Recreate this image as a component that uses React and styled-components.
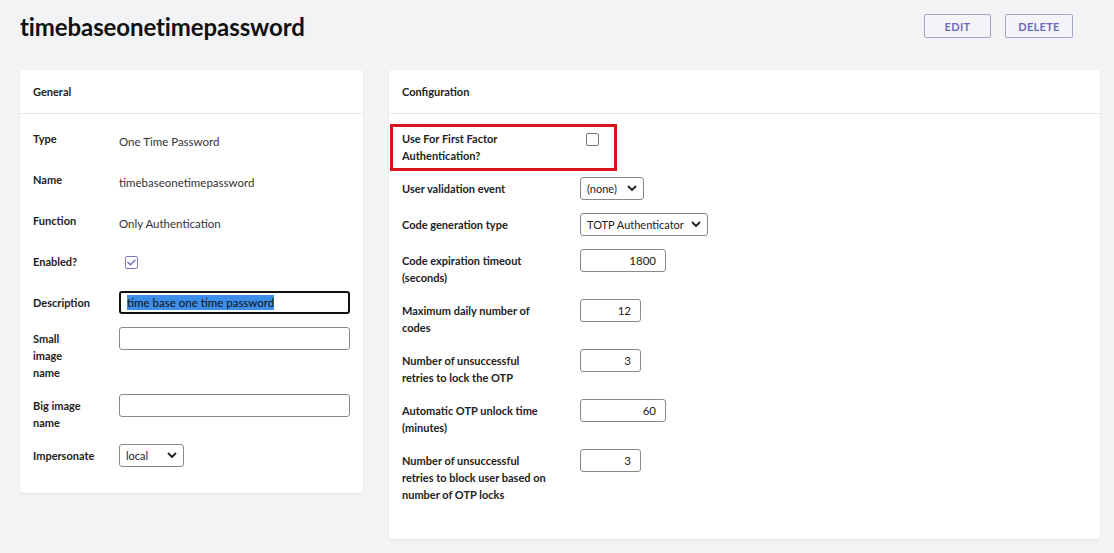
import styled, { createGlobalStyle } from "styled-components";

const GlobalStyle = createGlobalStyle`
  body {
    margin: 0;
    background: #f2f3f5;
    font-family: Lato, "Open Sans", sans-serif;
    color: #222;
  }
`;

const Page = styled.div`
  padding: 0 14px 0 20px;
  min-height: 553px;
  box-sizing: border-box;
`;

const Header = styled.div`
  display: flex;
  align-items: center;
  justify-content: space-between;
  height: 53px;
  padding-right: 27px;
  margin-bottom: 17px;
`;

const Title = styled.h1`
  margin: 0;
  font-size: 24px;
  font-weight: 700;
  color: #111;
  letter-spacing: -0.1px;
`;

const Actions = styled.div`
  display: flex;
  gap: 14px;
  margin-top: -1px;
`;

const Button = styled.button`
  width: ${({ $w }) => $w}px;
  height: 24px;
  background: #f4f4f8;
  border: 1px solid #a4a4cc;
  border-radius: 2px;
  color: #6b6bbd;
  font-family: inherit;
  font-size: 11px;
  font-weight: 700;
  letter-spacing: 0.3px;
`;

const Columns = styled.div`
  display: flex;
  align-items: flex-start;
  gap: 26px;
`;

const Card = styled.section`
  width: ${({ $w }) => $w}px;
  background: #fff;
  border-radius: 4px;
  box-shadow: 0 1px 2px rgba(0, 0, 0, 0.08);
  flex-shrink: 0;
`;

const CardHead = styled.div`
  height: 43px;
  display: flex;
  align-items: center;
  padding: 0 13px;
  border-bottom: 1px solid #e6e7ea;
  font-size: 11px;
  font-weight: 700;
  color: #222;
`;

const CardBody = styled.div`
  display: flex;
  flex-direction: column;
  gap: 13px;
  padding: ${({ $pad }) => $pad};
`;

const Row = styled.div`
  display: grid;
  grid-template-columns: ${({ $label }) => $label}px 1fr;
  align-items: start;
  min-height: ${({ $tall }) => ($tall ? 28 : 23)}px;
  position: relative;
`;

const Label = styled.div`
  padding-top: 3px;
  font-size: 11px;
  line-height: 17px;
  font-weight: 700;
  color: #222;
`;

const Value = styled.div`
  padding-top: 6px;
  font-size: 11.5px;
  line-height: 17px;
  color: #333;
`;

const TextBox = styled.div`
  box-sizing: border-box;
  width: ${({ $w }) => $w}px;
  height: 23px;
  border: ${({ $focus }) => ($focus ? "2px solid #111" : "1px solid #8a8a8a")};
  border-radius: 3px;
  background: #fff;
  display: flex;
  align-items: center;
  justify-content: ${({ $num }) => ($num ? "flex-end" : "flex-start")};
  padding: ${({ $focus }) => ($focus ? "0 6px" : "0 9px 0 7px")};
  font-size: 11.5px;
  color: #222;
`;

const Selected = styled.span`
  background: #3d8ee8;
  color: #111;
  line-height: 15px;
`;

const Select = styled.div`
  box-sizing: border-box;
  width: ${({ $w }) => $w}px;
  height: 23px;
  border: 1px solid #8a8a8a;
  border-radius: 3px;
  background: #fff;
  display: flex;
  align-items: center;
  justify-content: space-between;
  gap: 4px;
  padding: 0 6px 0 6px;
  font-size: 11px;
  color: #222;
  white-space: nowrap;
`;

const Check = styled.div`
  box-sizing: border-box;
  width: 13px;
  height: 13px;
  margin: ${({ $m }) => $m};
  border: 1px solid ${({ $on }) => ($on ? "#7b7bc4" : "#777")};
  border-radius: 2px;
  background: #fff;
  display: flex;
  align-items: center;
  justify-content: center;
`;

const Highlight = styled.div`
  position: absolute;
  left: -12px;
  top: -3px;
  width: 227px;
  height: 47px;
  border: 3px solid #d8131b;
  box-sizing: border-box;
  pointer-events: none;
`;

const Chevron = () => (
  <svg width="10" height="7" viewBox="0 0 10 7" style={{ flexShrink: 0 }}>
    <path d="M1.5 1.5 L5 5 L8.5 1.5" fill="none" stroke="#222" strokeWidth="1.8" strokeLinecap="round" strokeLinejoin="round" />
  </svg>
);

const Tick = () => (
  <svg width="9" height="7" viewBox="0 0 9 7">
    <path d="M1 3.6 L3.4 5.8 L8 1.2" fill="none" stroke="#6a6ac0" strokeWidth="1.4" strokeLinecap="round" strokeLinejoin="round" />
  </svg>
);

const config = [
  { label: ["User validation event"], select: "(none)", w: 64 },
  { label: ["Code generation type"], select: "TOTP Authenticator", w: 128 },
  { label: ["Code expiration timeout", "(seconds)"], num: "1800", w: 86 },
  { label: ["Maximum daily number of", "codes"], num: "12", w: 61 },
  { label: ["Number of unsuccessful", "retries to lock the OTP"], num: "3", w: 61 },
  { label: ["Automatic OTP unlock time", "(minutes)"], num: "60", w: 86 },
  { label: ["Number of unsuccessful", "retries to block user based on", "number of OTP locks"], num: "3", w: 61 },
];

const lines = (arr) =>
  arr.map((l, i) => (
    <span key={l}>
      {i > 0 && <br />}
      {l}
    </span>
  ));

export default function App() {
  return (
    <>
      <GlobalStyle />
      <Page>
        <Header>
          <Title>timebaseonetimepassword</Title>
          <Actions>
            <Button $w={67}>EDIT</Button>
            <Button $w={68}>DELETE</Button>
          </Actions>
        </Header>
        <Columns>
          <Card $w={343}>
            <CardHead>General</CardHead>
            <CardBody $pad="13px 13px 26px">
              <Row $label={86} $tall>
                <Label>Type</Label>
                <Value>One Time Password</Value>
              </Row>
              <Row $label={86} $tall>
                <Label>Name</Label>
                <Value>timebaseonetimepassword</Value>
              </Row>
              <Row $label={86} $tall>
                <Label>Function</Label>
                <Value>Only Authentication</Value>
              </Row>
              <Row $label={86} $tall>
                <Label>Enabled?</Label>
                <Check $on $m="6px 0 0 6px">
                  <Tick />
                </Check>
              </Row>
              <Row $label={86}>
                <Label>Description</Label>
                <TextBox $w={231} $focus>
                  <Selected>time base one time password</Selected>
                </TextBox>
              </Row>
              <Row $label={86}>
                <Label>{lines(["Small", "image", "name"])}</Label>
                <TextBox $w={231} />
              </Row>
              <Row $label={86}>
                <Label>{lines(["Big image", "name"])}</Label>
                <TextBox $w={231} />
              </Row>
              <Row $label={86}>
                <Label>Impersonate</Label>
                <Select $w={65}>
                  local
                  <Chevron />
                </Select>
              </Row>
            </CardBody>
          </Card>
          <Card $w={711}>
            <CardHead>Configuration</CardHead>
            <CardBody $pad="13px 13px 36px">
              <Row $label={178}>
                <Highlight />
                <Label>{lines(["Use For First Factor", "Authentication?"])}</Label>
                <Check $m="6px 0 0 6px" />
              </Row>
              {config.map((c) => (
                <Row $label={178} key={c.label.join(" ")}>
                  <Label>{lines(c.label)}</Label>
                  {c.select ? (
                    <Select $w={c.w}>
                      {c.select}
                      <Chevron />
                    </Select>
                  ) : (
                    <TextBox $w={c.w} $num>
                      {c.num}
                    </TextBox>
                  )}
                </Row>
              ))}
            </CardBody>
          </Card>
        </Columns>
      </Page>
    </>
  );
}
